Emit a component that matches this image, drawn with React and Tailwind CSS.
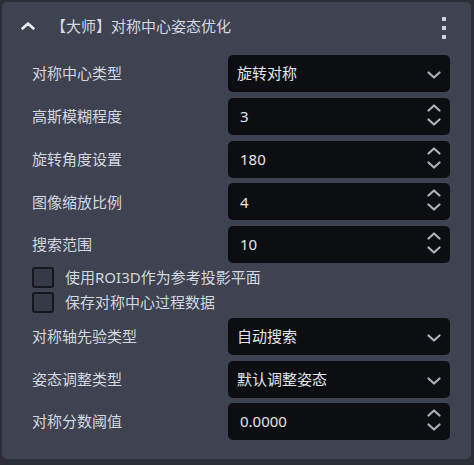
import React from "react";

const font = { fontFamily: '"Noto Sans", "Noto Sans CJK SC", sans-serif' };

function ChevronDown({ className = "" }) {
  return (
    <svg width="14" height="8" viewBox="0 0 14 8" className={className}>
      <path d="M1.5 1.5 L7 6.5 L12.5 1.5" fill="none" stroke="#aeb2bb" strokeWidth="2.2" strokeLinecap="round" strokeLinejoin="round" />
    </svg>
  );
}

function ChevronUp({ className = "", color = "#aeb2bb", w = 14, h = 8, sw = 2.2 }) {
  return (
    <svg width={w} height={h} viewBox="0 0 14 8" className={className}>
      <path d="M1.5 6.5 L7 1.5 L12.5 6.5" fill="none" stroke={color} strokeWidth={sw} strokeLinecap="round" strokeLinejoin="round" />
    </svg>
  );
}

function Row({ label, value, kind }) {
  return (
    <div className="flex items-center h-[37px]">
      <div className="w-[196px] text-[15px] text-[#d3d7df]">{label}</div>
      <div className="relative flex items-center w-[222px] h-[37px] rounded-[5px] bg-[#0d0e12]">
        {kind === "select" ? (
          <>
            <span className="pl-[9px] text-[15px] text-[#e3e5ea]">{value}</span>
            <ChevronDown className="absolute right-[9px] top-[16px]" />
          </>
        ) : (
          <>
            <span className="pl-[12px] text-[15px] text-[#e3e5ea]">{value}</span>
            <div className="absolute right-[9px] top-[6px] flex flex-col gap-[6px]">
              <ChevronUp />
              <ChevronDown />
            </div>
          </>
        )}
      </div>
    </div>
  );
}

function Check({ label }) {
  return (
    <div className="flex items-center h-[21px]">
      <div className="w-[22px] h-[21px] rounded-[3px] border-2 border-[#16171c] bg-[#363946]"></div>
      <span className="ml-[11px] text-[15px] text-[#d3d7df]">{label}</span>
    </div>
  );
}

export default function App() {
  return (
    <div style={font} className="w-[474px] h-[465px] bg-[#2b2e37] pt-[2px] pl-[2px]">
      <div className="w-[469px] h-[457px] rounded-[5px] bg-[#3e4251] flex flex-col">
        <div className="relative flex items-center h-[50px] pb-[2px]">
          <ChevronUp className="ml-[19px]" color="#e9ebf0" w={14} h={8} sw={2.6} />
          <span className="ml-[16px] text-[15px] text-[#d6d9e0]">【大师】对称中心姿态优化</span>
          <div className="absolute left-[440px] top-[15px] flex flex-col gap-[5px]">
            <div className="w-[4px] h-[4px] bg-[#cfd2da]"></div>
            <div className="w-[4px] h-[4px] bg-[#cfd2da]"></div>
            <div className="w-[4px] h-[4px] bg-[#cfd2da]"></div>
          </div>
        </div>
        <div className="flex flex-col pl-[30px] mt-[3px]">
          <div className="flex flex-col gap-[5.75px]">
            <Row label="对称中心类型" value="旋转对称" kind="select" />
            <Row label="高斯模糊程度" value="3" kind="num" />
            <Row label="旋转角度设置" value="180" kind="num" />
            <Row label="图像缩放比例" value="4" kind="num" />
            <Row label="搜索范围" value="10" kind="num" />
          </div>
          <div className="flex flex-col gap-[4px] mt-[4px]">
            <Check label="使用ROI3D作为参考投影平面" />
            <Check label="保存对称中心过程数据" />
          </div>
          <div className="flex flex-col gap-[5.5px] mt-[5px]">
            <Row label="对称轴先验类型" value="自动搜索" kind="select" />
            <Row label="姿态调整类型" value="默认调整姿态" kind="select" />
            <Row label="对称分数阈值" value="0.0000" kind="num" />
          </div>
        </div>
      </div>
    </div>
  );
}
